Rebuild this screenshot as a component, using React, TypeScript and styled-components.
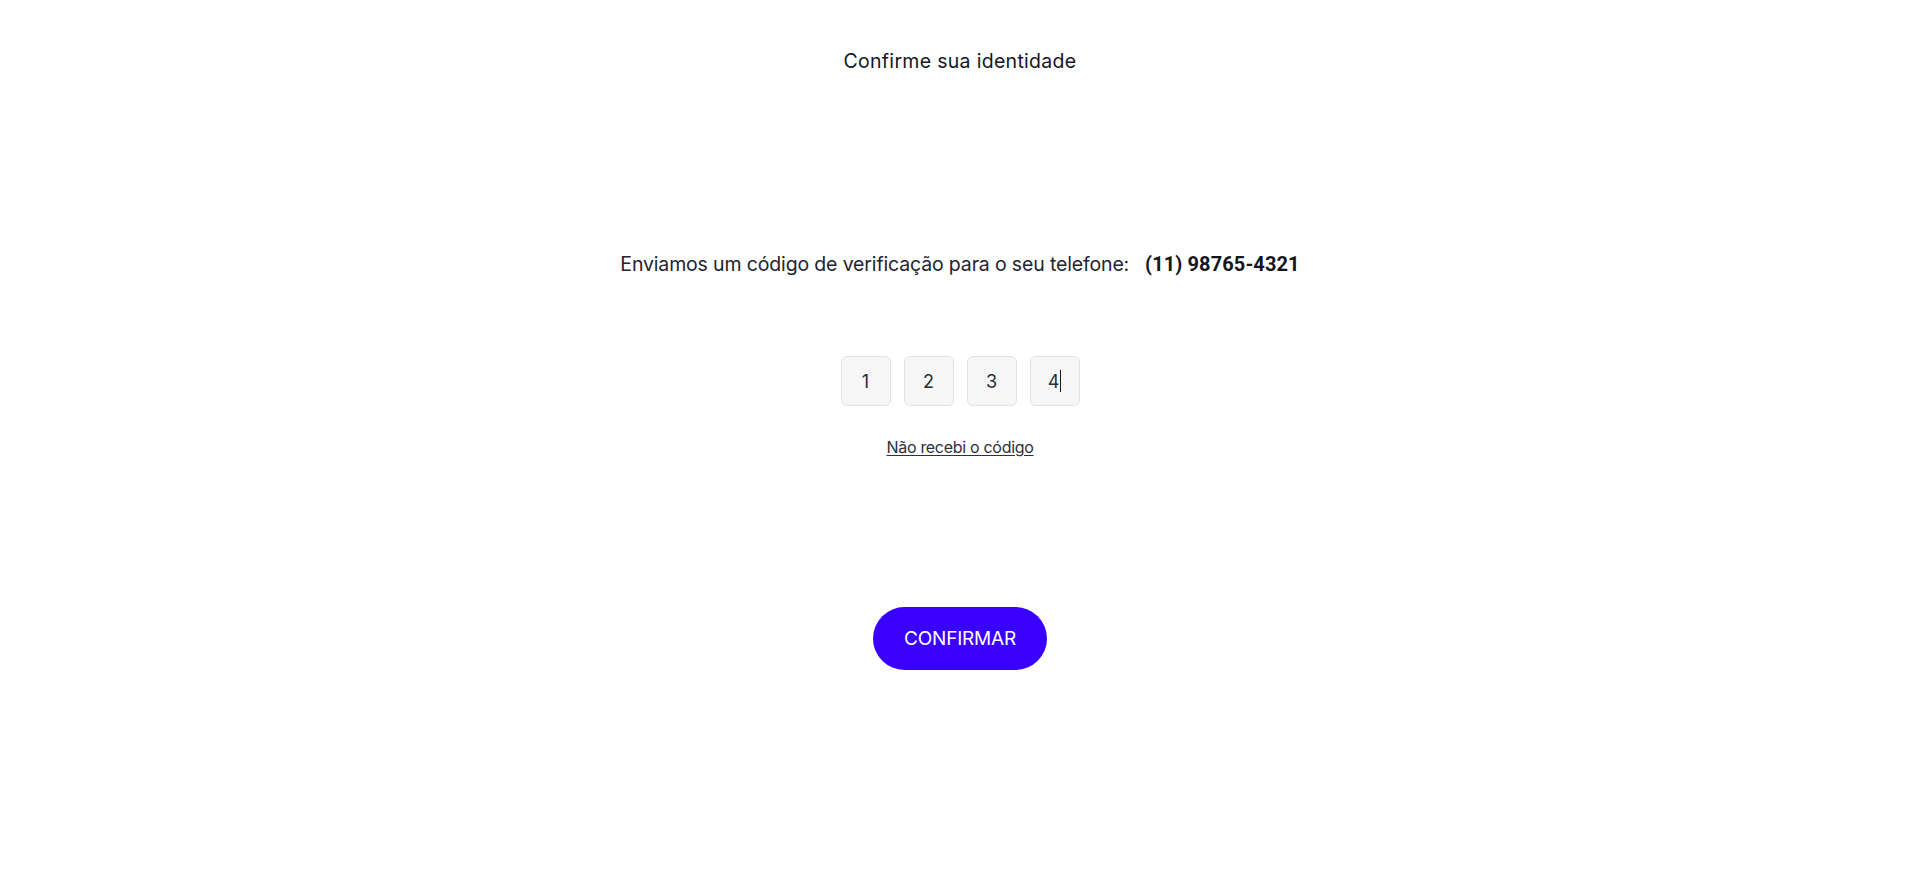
import styled, { createGlobalStyle } from 'styled-components';

const GlobalStyle = createGlobalStyle`
  html, body { margin: 0; padding: 0; background: #ffffff; }
  body { font-family: Inter, 'Noto Sans', Arial, sans-serif; color: #1b1b2b; }
`;

const Page = styled.div`
  min-height: 875px;
  display: flex;
  flex-direction: column;
  align-items: center;
`;

const Header = styled.h1`
  margin: 0;
  padding-top: 49px;
  font-size: 19.5px;
  font-weight: 400;
  line-height: 24px;
  color: #141726;
  letter-spacing: 0.3px;
`;

const Message = styled.p`
  margin: 179px 0 0;
  display: flex;
  align-items: baseline;
  gap: 16px;
  font-size: 19.5px;
  line-height: 24px;
  color: #22242f;
  letter-spacing: -0.15px;
`;

const Phone = styled.strong`
  font-family: Roboto, 'Liberation Sans', sans-serif;
  font-weight: 700;
  font-size: 20px;
  letter-spacing: 0.1px;
  color: #15151c;
`;

const CodeRow = styled.div`
  margin-top: 80px;
  display: flex;
  gap: 13px;
`;

const CodeBox = styled.div`
  width: 50px;
  height: 50px;
  box-sizing: border-box;
  border: 1px solid #e2e2e4;
  border-radius: 6px;
  background: #f6f6f7;
  display: flex;
  align-items: center;
  justify-content: center;
  font-size: 18px;
  color: #2a2b33;
`;

const Caret = styled.span`
  display: inline-block;
  width: 1px;
  height: 22px;
  margin-left: 1px;
  background: #1a1a1a;
`;

const ResendLink = styled.a`
  margin-top: 31px;
  font-size: 16px;
  line-height: 20px;
  color: #2e2f38;
  text-decoration: underline;
  text-underline-offset: 2px;
  letter-spacing: -0.3px;
  cursor: pointer;
`;

const ConfirmButton = styled.button`
  margin-top: 150px;
  width: 174px;
  height: 63px;
  border: none;
  border-radius: 999px;
  background: #3a00ff;
  color: #ffffff;
  font-family: Inter, 'Noto Sans', Arial, sans-serif;
  font-size: 19px;
  font-weight: 400;
  letter-spacing: -0.2px;
  cursor: pointer;
`;

const digits = ['1', '2', '3', '4'];

const App = () => {
  return (
    <>
      <GlobalStyle />
      <Page>
        <Header>Confirme sua identidade</Header>
        <Message>
          <span>Enviamos um código de verificação para o seu telefone:</span>
          <Phone>(11) 98765-4321</Phone>
        </Message>
        <CodeRow>
          {digits.map((d, i) => (
            <CodeBox key={i}>
              {d}
              {i === digits.length - 1 && <Caret />}
            </CodeBox>
          ))}
        </CodeRow>
        <ResendLink>Não recebi o código</ResendLink>
        <ConfirmButton>CONFIRMAR</ConfirmButton>
      </Page>
    </>
  );
};

export default App;
